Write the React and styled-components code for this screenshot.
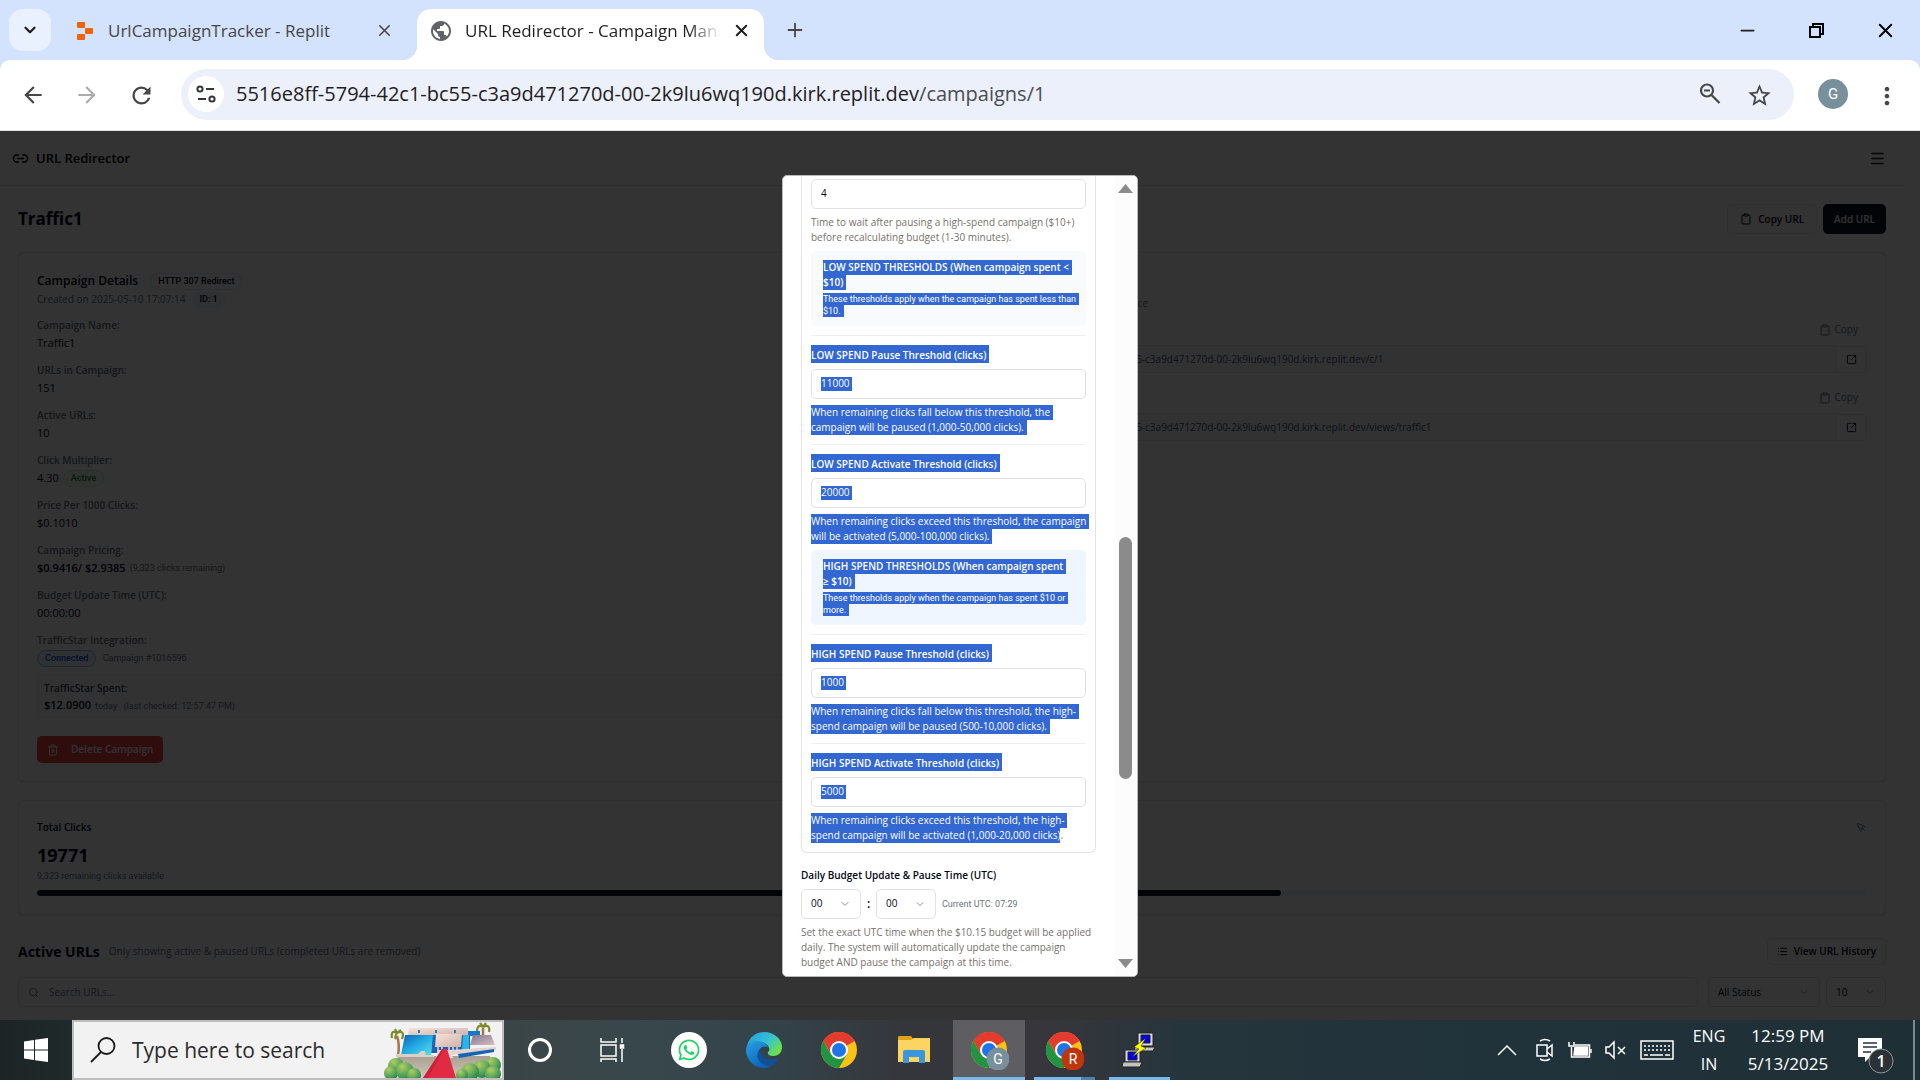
import React from 'react';
import styled, { createGlobalStyle, css } from 'styled-components';
import {
  Link2, Menu, Clipboard, SquareArrowOutUpRight, Trash2, List, MousePointer, Search, ChevronDown, Plus, X, Minus,
} from 'lucide-react';
import { MdArrowBack, MdArrowForward, MdRefresh, MdStarOutline, MdPublic, MdMoreVert } from 'react-icons/md';
import { FaWhatsapp } from 'react-icons/fa';

const Global = createGlobalStyle`
  *, *::before, *::after { box-sizing: border-box; }
  body { margin: 0; font-family: "Open Sans", "Noto Sans", sans-serif; color: #020617; }
  h1, h2, h3, p, dl, dt, dd { margin: 0; }
  button, input, select { font: inherit; color: inherit; margin: 0; }
  button { border: 0; padding: 0; background: none; }
  svg { display: block; flex: none; }
`;

const Screen = styled.div`
  display: flex;
  flex-direction: column;
  height: 100vh;
  overflow: hidden;
`;

/* ---------- browser window ---------- */
const TabStrip = styled.header`
  display: flex;
  align-items: stretch;
  height: 60px;
  flex: none;
  padding: 9px 0 0 9px;
  background: #d3e2fd;
`;
const TabMenu = styled.button`
  width: 42px;
  height: 42px;
  border-radius: 14px;
  background: #e9f1fe;
  display: grid;
  place-items: center;
  color: #1f1f1f;
`;
const Tab = styled.div`
  position: relative;
  display: flex;
  align-items: center;
  gap: ${(p) => (p.$active ? 12 : 14)}px;
  width: ${(p) => (p.$active ? 347 : 341)}px;
  margin-left: ${(p) => (p.$active ? 0 : 25)}px;
  padding: ${(p) => (p.$active ? '0 14px 8px 12px' : '0 24px 8px 0')};
  border-radius: 14px 14px 0 0;
  background: ${(p) => (p.$active ? '#fff' : 'transparent')};
  color: ${(p) => (p.$active ? '#1f1f1f' : '#474747')};
  font-size: 17px;
  line-height: 26px;
  ${(p) => p.$active && css`
    &::before, &::after {
      content: "";
      position: absolute;
      bottom: 0;
      width: 14px;
      height: 14px;
    }
    &::before { left: -14px; background: radial-gradient(circle at 0 0, transparent 14px, #fff 14px); }
    &::after { right: -14px; background: radial-gradient(circle at 100% 0, transparent 14px, #fff 14px); }
  `}
`;
const TabTitle = styled.span`
  flex: 1;
  overflow: hidden;
  white-space: nowrap;
  ${(p) => p.$fade && css`mask-image: linear-gradient(90deg, #000 88%, transparent 100%);`}
`;
const IconButton = styled.button`
  display: grid;
  place-items: center;
  width: ${(p) => p.$w || 24}px;
  height: ${(p) => p.$h || 24}px;
  color: ${(p) => p.$color || '#1f1f1f'};
`;
const NewTab = styled(IconButton)`
  margin: 9px 0 0 19px;
`;
const WindowControls = styled.div`
  display: flex;
  margin-left: auto;
  height: 42px;
`;
const Toolbar = styled.div`
  flex: none;
  display: flex;
  align-items: center;
  height: 71px;
  padding: 0 17px 2px 16px;
  background: #fff;
  border-bottom: 1px solid #dcdfe3;
  border-radius: 10px 10px 0 0;
`;
const ToolbarBack = styled.div`
  flex: none;
  background: #d3e2fd;
`;
const NavButtons = styled.div`
  display: flex;
  gap: 20px;
`;
const Omnibox = styled.div`
  flex: 1;
  display: flex;
  align-items: center;
  height: 51px;
  margin: 0 24px 0 23px;
  padding: 0 24px 0 7px;
  border-radius: 26px;
  background: #ebf0fa;
`;
const SiteInfo = styled.button`
  display: grid;
  place-items: center;
  width: 36px;
  height: 36px;
  border-radius: 50%;
  background: #fff;
`;
const Address = styled.div`
  flex: 1;
  margin-left: 12px;
  font-size: 20px;
  line-height: 28px;
  color: #1f2024;
  span { color: #4a4d52; }
`;
const OmniActions = styled.div`
  display: flex;
  gap: 24px;
`;
const Avatar = styled.button`
  width: 30px;
  height: 30px;
  border-radius: 50%;
  background: #78909c;
  color: #fff;
  font-family: Roboto, sans-serif;
  font-size: 15px;
  margin-right: 23px;
`;

/* ---------- web page ---------- */
const Viewport = styled.main`
  position: relative;
  flex: 1;
  min-height: 0;
  overflow: hidden;
  background: #fcfcfc;
  font-size: 10px;
  line-height: 15px;
`;
const PageBody = styled.div`
  margin-right: 16px;
`;
const SiteHeader = styled.div`
  display: flex;
  align-items: center;
  justify-content: space-between;
  height: 55px;
  padding: 0 20px 0 12px;
  border-bottom: 1px solid #e5e7eb;
`;
const Brand = styled.a`
  display: flex;
  align-items: center;
  gap: 7px;
  color: #000;
  font-size: 13px;
  line-height: 20px;
  font-weight: 600;
  text-decoration: none;
`;
const Content = styled.div`
  padding: 18px 18px 0;
`;
const TitleRow = styled.div`
  display: flex;
  align-items: center;
  justify-content: space-between;
  gap: 6px;
  height: 30px;
  margin-bottom: 18px;
`;
const PageTitle = styled.h1`
  flex: 1;
  font-size: 17px;
  line-height: 24px;
  font-weight: 700;
`;
const Button = styled.button`
  display: flex;
  align-items: center;
  justify-content: center;
  gap: ${(p) => p.$gap || 6}px;
  height: ${(p) => p.$h || 30}px;
  padding: 0 ${(p) => p.$px || 12}px;
  border-radius: 5px;
  border: 1px solid ${(p) => (p.$tone ? 'transparent' : '#e2e8f0')};
  background: ${(p) => ({ dark: '#0f172a', danger: '#ef4444' }[p.$tone] || 'transparent')};
  background-clip: border-box;
  color: ${(p) => (p.$tone ? '#f8fafc' : '#020617')};
  font-weight: 600;
  white-space: nowrap;
`;
const Card = styled.section`
  border: 1px solid #e2e8f0;
  border-radius: 6px;
  box-shadow: 0 1px 2px rgba(0, 0, 0, 0.08);
  padding: 18px;
  margin-bottom: 18px;
`;
const DetailGrid = styled.div`
  display: grid;
  grid-template-columns: 1fr 1fr;
  gap: 18px;
`;
const CardTitleRow = styled.div`
  display: flex;
  align-items: center;
  gap: 12px;
  height: 20px;
`;
const CardTitle = styled.h2`
  font-size: 12px;
  line-height: 20px;
  font-weight: 600;
`;
const Badge = styled.span`
  display: inline-flex;
  align-items: center;
  height: 17px;
  padding: 0 7px;
  border-radius: 9px;
  font-family: Roboto, "Open Sans", sans-serif;
  font-size: 9px;
  line-height: 15px;
  font-weight: 500;
  border: 1px solid ${(p) => ({ green: '#bbf7d0', blue: '#93b4f5', gray: '#f1f5f9' }[p.$tone] || '#dfe4ea')};
  background: ${(p) => ({ green: '#f0fdf4', blue: '#eff6ff', gray: '#f1f5f9' }[p.$tone] || 'transparent')};
  color: ${(p) => ({ green: '#15803d', blue: '#1d4ed8' }[p.$tone] || '#020617')};
`;
const Created = styled.div`
  display: flex;
  align-items: center;
  gap: 6px;
  height: 17px;
  color: #64748b;
`;
const Facts = styled.dl`
  display: flex;
  flex-direction: column;
  gap: 9px;
  margin-top: 9px;
`;
const Fact = styled.div`
  height: 36px;
  dt { height: 17px; line-height: 16px; color: #6b7280; font-weight: 600; }
  dd { display: flex; align-items: center; gap: 4px; height: 18px; font-size: 11px; line-height: 18px; }
`;
const Small = styled.span`
  font-family: Roboto, "Open Sans", sans-serif;
  font-size: 9px;
  line-height: 14px;
  font-weight: 400;
  color: #6b7280;
`;
const SpentBox = styled.div`
  margin: 6px 0 18px;
  padding: 5px 6px;
  height: 44px;
  border: 1px solid #eceff3;
  border-radius: 4px;
  background: #f9fafb;
`;
const SpentLabel = styled.div`
  line-height: 16px;
  font-weight: 600;
  color: #374151;
`;
const SpentValue = styled.div`
  display: flex;
  align-items: baseline;
  gap: 4px;
  font-size: 11px;
  line-height: 18px;
  font-weight: 600;
`;
const LinkColumn = styled.div`
  padding-top: 25px;
`;
const Hint = styled.p`
  width: 187px;
  text-align: right;
  color: #64748b;
  white-space: nowrap;
`;
const LinkBlock = styled.div`
  padding-top: 5px;
  margin-bottom: 6px;
`;
const CopyRow = styled.div`
  display: flex;
  justify-content: flex-end;
  padding: 0 9px 2px 0;
  button { display: flex; align-items: center; gap: 4px; height: 27px; color: #64748b; }
`;
const LinkRow = styled.div`
  display: flex;
  align-items: center;
  input {
    flex: 1;
    height: 28px;
    padding: 0 8px 0 28px;
    border: 1px solid #e2e8f0;
    background: #f8fafc;
    color: #475569;
    border-radius: 5px 0 0 5px;
  }
  a {
    display: grid;
    place-items: center;
    width: 30px;
    height: 27px;
    border: 1px solid #e2e8f0;
    border-left: 0;
    border-radius: 0 5px 5px 0;
    color: #020617;
  }
`;
const StatHead = styled.div`
  display: flex;
  align-items: center;
  justify-content: space-between;
  height: 16px;
  font-weight: 600;
`;
const StatValue = styled.p`
  margin-top: 8px;
  font-size: 18px;
  line-height: 24px;
  font-weight: 700;
`;
const StatNote = styled.p`
  font-family: Roboto, "Open Sans", sans-serif;
  font-size: 9px;
  line-height: 18px;
  color: #64748b;
`;
const Meter = styled.div`
  height: 6px;
  margin-top: 5px;
  border-radius: 3px;
  background: #f1f5f9;
  overflow: hidden;
`;
const MeterFill = styled.div`
  height: 100%;
  background: #0f172a;
  border-radius: 3px;
`;
const SectionHead = styled.div`
  display: flex;
  align-items: center;
  gap: 9px;
  height: 27px;
  margin-top: 23px;
  h2 { font-size: 14px; line-height: 22px; }
  p { flex: 1; color: #64748b; }
`;
const Filters = styled.div`
  display: flex;
  gap: 6px;
  margin-top: 12px;
`;
const SearchField = styled.label`
  flex: 1;
  display: flex;
  align-items: center;
  gap: 10px;
  height: 30px;
  padding: 0 9px;
  margin-right: 4px;
  border: 1px solid #e2e8f0;
  border-radius: 5px;
  color: #64748b;
  input { flex: 1; border: 0; padding: 0; background: none; outline: 0; }
  input::placeholder { color: #64748b; opacity: 1; }
`;
const SelectBox = styled.div`
  display: grid;
  align-items: center;
  width: ${(p) => p.$w}px;
  height: 30px;
  border: 1px solid #e2e2e4;
  border-radius: 5px;
  select {
    grid-area: 1 / 1;
    appearance: none;
    height: 100%;
    border: 0;
    background: none;
    padding: 0 9px;
    outline: 0;
  }
  svg { grid-area: 1 / 1; justify-self: end; margin-right: 9px; color: #8a8f98; pointer-events: none; }
`;

/* ---------- dialog ---------- */
const Backdrop = styled.div`
  position: absolute;
  inset: 0;
  display: flex;
  align-items: center;
  justify-content: center;
  background: rgba(0, 0, 0, 0.8);
`;
const Dialog = styled.div`
  display: flex;
  width: 356px;
  height: 802px;
  max-height: 92%;
  border: 1px solid #b9b9b9;
  border-radius: 5px;
  background: #fff;
  overflow: hidden;
`;
const DialogScroll = styled.form`
  flex: 1;
  padding: 0 18px;
  overflow: hidden;
`;
const Group = styled.div`
  padding: 3px 9px 9px;
  border: 1px solid #e4e4e7;
  border-top: 0;
  border-radius: 0 0 6px 6px;
`;
const Field = styled.div`
  display: flex;
  flex-direction: column;
  gap: 6px;
  ${(p) => p.$ruled && css`
    margin-top: 9px;
    padding-top: 9px;
    border-top: 1px solid #efeff1;
  `}
`;
const FieldLabel = styled.label`
  display: flex;
  height: 18px;
  line-height: 20px;
  font-weight: 600;
  white-space: nowrap;
`;
const TextBox = styled.div`
  display: flex;
  align-items: center;
  height: 30px;
  padding: 0 9px;
  border: 1px solid #e2e2e4;
  border-radius: 5px;
  input {
    field-sizing: content;
    height: 14px;
    min-width: 8px;
    padding: 0 2px 0 0;
    border: 0;
    outline: 0;
    background: ${(p) => (p.$selected ? '#3367d1' : 'transparent')};
    color: ${(p) => (p.$selected ? '#fff' : '#0a0a0a')};
  }
`;
const Marked = styled.mark`
  padding-right: ${(p) => (p.$tight ? 0 : 3)}px;
  background: #3367d1;
  color: #fff;
`;
const Line = styled.span`
  display: flex;
  white-space: nowrap;
`;
const Help = styled.p`
  color: #78716c;
`;
const Callout = styled.div`
  margin-top: 6px;
  padding: 9px 12px;
  border-radius: 5px;
  background: ${(p) => (p.$blue ? '#eff6ff' : '#f9fafb')};
  h3 { font-size: 10px; line-height: 15px; font-weight: 600; }
  p { margin-top: 3px; font-family: Roboto, "Open Sans", sans-serif; font-size: 9px; line-height: 12px; }
`;
const TimeSection = styled.div`
  display: flex;
  flex-direction: column;
  gap: 6px;
  padding-top: 12px;
`;
const TimeRow = styled.div`
  display: flex;
  align-items: center;
  gap: 6px;
  b { width: 3px; font-size: 12px; font-weight: 600; }
`;
const Scrollbar = styled.div`
  display: flex;
  flex-direction: column;
  align-items: center;
  width: 23px;
  padding: 8px 0;
  background: #fcfcfc;
`;
const Thumb = styled.div`
  width: 13px;
  height: 242px;
  margin-top: 344px;
  margin-bottom: auto;
  border-radius: 7px;
  background: #8b8b8b;
`;

/* ---------- taskbar ---------- */
const Taskbar = styled.footer`
  flex: none;
  display: flex;
  height: 60px;
  color: #fff;
  background: linear-gradient(90deg, #1c2425 0%, #20292a 3%, #3b4648 28%, #37474c 34%, #33434a 40%, #35363c 47%, #36363c 55%, #24353c 62%, #20323a 80%, #1f2f36 100%);
`;
const StartButton = styled.button`
  display: grid;
  place-items: center;
  width: 72px;
`;
const TaskSearch = styled.label`
  display: flex;
  align-items: center;
  width: 432px;
  padding-left: 16px;
  border: 2px solid #bdbdbd;
  background: #f2f2f2;
  color: #1a1a1a;
  input {
    flex: 1;
    min-width: 0;
    margin-left: 16px;
    padding: 0;
    border: 0;
    background: none;
    font-size: 21px;
    line-height: 28px;
    outline: 0;
  }
  input::placeholder { color: #2b2b2b; opacity: 1; }
`;
const TaskButton = styled.button`
  position: relative;
  display: grid;
  place-items: center;
  width: 72px;
  background: ${(p) => (p.$active ? '#5d5d62' : 'transparent')};
  ${(p) => p.$open && css`
    &::after {
      content: "";
      position: absolute;
      bottom: 0;
      left: ${p.$active ? 0 : 6}px;
      right: ${p.$active ? 0 : 5}px;
      height: 3px;
      background: ${p.$stack ? 'linear-gradient(90deg, #76b9ed 77%, #4f83ac 77%)' : '#76b9ed'};
    }
  `}
`;
const Apps = styled.div`
  display: flex;
  gap: 3px;
  margin-left: 5px;
`;
const Tray = styled.div`
  display: flex;
  align-items: center;
  margin-left: auto;
`;
const TrayIcons = styled.div`
  display: flex;
  align-items: center;
  gap: 13px;
`;
const TrayText = styled.div`
  width: ${(p) => p.$w}px;
  text-align: center;
  font-size: ${(p) => p.$size}px;
  line-height: 28px;
  white-space: nowrap;
`;
const ShowDesktop = styled.button`
  align-self: stretch;
  width: 7px;
  border-left: 2px solid #7e898d;
`;

const Replit = () => (
  <svg width="18" height="22" viewBox="0 0 18 22" fill="#f26207">
    <rect x="1" y="2" width="8" height="6" rx="1" />
    <rect x="9" y="8" width="8" height="6" rx="1" />
    <rect x="1" y="14" width="8" height="6" rx="1" />
  </svg>
);
const Tune = () => (
  <svg width="20" height="20" viewBox="0 0 20 20" fill="none" stroke="#33363b" strokeWidth="2">
    <circle cx="4" cy="5" r="2.6" /><path d="M10 5h8M2 15h8" /><circle cx="16" cy="15" r="2.6" />
  </svg>
);
const ZoomOut = () => (
  <svg width="24" height="24" viewBox="0 0 24 24" fill="none" stroke="#474747" strokeWidth="2.2">
    <circle cx="9" cy="8.500" r="6" /><path d="M13 12.500l8.500 8.500M6 8.500h6" />
  </svg>
);
const Restore = () => (
  <svg width="17" height="17" viewBox="0 0 17 17" fill="none" stroke="#000" strokeWidth="2">
    <path d="M2 5h10v10H2zM5 5V2h10v10h-3" />
  </svg>
);
const Windows = () => (
  <svg width="24" height="24" viewBox="0 0 24 24" fill="#fff">
    <path d="M0 3.400L10 2v9.500H0zM11 1.800L24 0v11.500H11zM0 12.500h10V22L0 20.600zM11 12.500h13V24l-13-1.800z" />
  </svg>
);
const Magnifier = () => (
  <svg width="26" height="26" viewBox="0 0 26 26" fill="none" stroke="#1a1a1a" strokeWidth="1.8">
    <circle cx="16.500" cy="9" r="8" /><path d="M11 15L1 25" />
  </svg>
);
const Premiere = () => (
  <svg width="118" height="56" viewBox="0 0 118 56">
    <defs>
      <linearGradient id="glass" x1="0" y1="0" x2="1" y2="1"><stop offset="0" stopColor="#0a5fb4" /><stop offset=".45" stopColor="#1fa6e0" /><stop offset="1" stopColor="#58e0ec" /></linearGradient>
      <linearGradient id="roof" x1="0" y1="0" x2="1" y2="1"><stop offset="0" stopColor="#f7e3d8" /><stop offset="1" stopColor="#cfb0aa" /></linearGradient>
      <linearGradient id="wing" x1="0" y1="0" x2="1" y2="1"><stop offset="0" stopColor="#7f7596" /><stop offset="1" stopColor="#d9c0be" /></linearGradient>
      <linearGradient id="ground" x1="0" y1="0" x2="0" y2="1"><stop offset="0" stopColor="#a89f92" /><stop offset="1" stopColor="#cfc7bb" /></linearGradient>
      <radialGradient id="leaf" cx=".35" cy=".25" r=".9"><stop offset="0" stopColor="#b4cb62" /><stop offset=".5" stopColor="#5aa85a" /><stop offset="1" stopColor="#1c6b45" /></radialGradient>
    </defs>
    <path d="M14 34h92l6 22H8z" fill="url(#ground)" />
    <path d="M13 14q3 9 1 19M99 6v12" stroke="#a5764c" strokeWidth="2.500" fill="none" />
    <path d="M13 11c-5-3-6 1-5 5M13 11c6-3 7 1 5 6M13 11c-2 3-2 5-1 6M13 11l-2-4M13 11l4-3M99 5c-5-3-6 1-6 5M99 5c6-3 7 1 6 5M99 5l-3-4M99 5l3-4" stroke="#7f8a2a" strokeWidth="2.200" fill="none" />
    <path d="M84 9h12v5H84z" fill="#1677c9" />
    <path d="M48 13h38v18H47z" fill="#1a63b8" />
    <path d="M21 13h28l-2 20H17z" fill="url(#glass)" />
    <path d="M79 13h6v16h-7z" fill="#2ab4e8" />
    <path d="M25 6h59v7H24z" fill="url(#roof)" /><path d="M35 8v3M52 8v3M71 8v3" stroke="#1d86b8" strokeWidth="2" />
    <path d="M52 12h26l-1 13H51z" fill="url(#roof)" />
    <path d="M89 13h18l4 10H86z" fill="url(#wing)" />
    <path d="M66 28l46-3v3l-44 5z" fill="#e6d2cc" /><path d="M74 32l36-5v3l-35 6z" fill="#1565b5" />
    <path d="M12 32h22l3-3h4l1 4h8v2H12z" fill="#d9d0c6" />
    <path d="M54 25v6M58 25v4M65 25v4M69 25v4M73 25v4" stroke="#e9d6cf" strokeWidth="1.500" />
    <path d="M54 28h4l-2 8h-4zM63 28h4l2 8h-4z" fill="#e9dad5" />
    <path d="M58 27h5l9 29H39z" fill="#e12b42" /><path d="M58 27h2L44 56h-5z" fill="#b51a30" opacity=".5" />
    <g fill="url(#leaf)">
      <circle cx="12" cy="44" r="8" /><circle cx="7" cy="51" r="7" /><circle cx="21" cy="49" r="9" /><circle cx="30" cy="53" r="7" />
      <circle cx="109" cy="43" r="8" /><circle cx="98" cy="47" r="9" /><circle cx="86" cy="50" r="9" /><circle cx="78" cy="53" r="6" /><circle cx="109" cy="52" r="8" />
    </g>
  </svg>
);
const TaskView = () => (
  <svg width="26" height="26" viewBox="0 0 26 26" fill="none" stroke="#fff" strokeWidth="1.500">
    <path d="M2 1v4h15V1M2 8h15v11H2zM2 25v-3h15v3M23 1v5M23 12v13" /><path d="M21.500 8h3v3h-3z" fill="#fff" />
  </svg>
);
const Edge = () => (
  <svg width="36" height="36" viewBox="0 0 36 36">
    <defs>
      <linearGradient id="e1" x1="0" y1="0" x2="1" y2=".6"><stop offset="0" stopColor="#1d9be0" /><stop offset=".6" stopColor="#35c1d4" /><stop offset="1" stopColor="#6be04b" /></linearGradient>
      <linearGradient id="e2" x1="0" y1="0" x2=".6" y2="1"><stop offset="0" stopColor="#2a9fe4" /><stop offset="1" stopColor="#0a62b8" /></linearGradient>
    </defs>
    <path d="M1 14C3 5 10 0 18 0c10 0 18 7 18 15 0 6-4 9-9 9-4 0-6-2-5-4 1-1 2-2 1-4-1-4-5-6-10-6S3 11 1 14z" fill="url(#e1)" />
    <path d="M0 18c0-6 5-9 11-9 5 0 9 2 11 6-2-1-6-1-8 2-3 4-1 12 6 15 3 1 5 1 7 0-3 3-7 4-9 4C8 36 0 28 0 18z" fill="url(#e2)" />
    <path d="M14 17c-6 6-1 17 10 17 5-1 8-5 9-7 0-1 0-1-1-1-7 4-17 1-18-9z" fill="#134f97" />
  </svg>
);
const Chrome = ({ letter, tint }) => (
  <svg width="40" height="40" viewBox="0 0 40 40">
    <circle cx="20" cy="20" r="18" fill="#fbc116" />
    <path d="M20 20L4.400 11A18 18 0 0 1 35.600 11z" fill="#e33b2e" />
    <path d="M20 11h15.600A18 18 0 0 0 4.400 11L12.200 24.500z" fill="#e33b2e" />
    <path d="M4.400 11A18 18 0 0 0 20 38l7.800-13.500L20 29l-8-4.500z" fill="#229342" />
    <circle cx="20" cy="20" r="9" fill="#fff" /><circle cx="20" cy="20" r="7" fill="#1f74e8" />
    {letter && (
      <>
        <circle cx="29" cy="29" r="11.500" fill={tint} />
        <text x="29" y="34" textAnchor="middle" fontFamily="Roboto, sans-serif" fontSize="14" fill="#fff">{letter}</text>
      </>
    )}
  </svg>
);
const Folder = () => (
  <svg width="34" height="30" viewBox="0 0 34 30">
    <path d="M1 2q0-1 1-1h12l3 4H1z" fill="#e0a218" /><path d="M1 5h13l3-2h16v24H1z" fill="#fcd462" />
    <path d="M6 28V17q0-2 2-2h18q2 0 2 2v11h-6v-6h-10v6z" fill="#3b96dd" />
  </svg>
);
const Putty = () => (
  <svg width="36" height="36" viewBox="0 0 36 36" stroke="#222" strokeWidth="1">
    <path d="M17 1h15v13H17z" fill="#d8d8d8" /><path d="M20 3h9v8h-9z" fill="#0000f0" /><path d="M14 15h20l-2 4H13z" fill="#c4c4c4" />
    <path d="M4 18h15v12H4z" fill="#d8d8d8" /><path d="M7 20h9v8H7z" fill="#0000f0" /><path d="M2 30h19l-2 5H1z" fill="#c4c4c4" />
    <path d="M25 6l-12 9 5 2-7 8 14-9-5-2z" fill="#ffff00" strokeWidth=".500" />
  </svg>
);
const tray = { fill: 'none', stroke: '#fff', strokeWidth: 1.5 };

const Strong = styled.strong`
  font-weight: 600;
`;

const facts = [
  ['Campaign Name:', 'Traffic1'],
  ['URLs in Campaign:', '151'],
  ['Active URLs:', '10'],
  ['Click Multiplier:', <>4.30 <Badge $tone="green">Active</Badge></>],
  ['Price Per 1000 Clicks:', '$0.1010'],
  ['Campaign Pricing:', <><Strong>$0.9416/ $2.9385</Strong><Small>(9,323 clicks remaining)</Small></>],
  ['Budget Update Time (UTC):', '00:00:00'],
  ['TrafficStar Integration:', <><Badge $tone="blue">Connected</Badge><Small>&nbsp;Campaign #1016596</Small></>],
];
const host = 'https://5516e8ff-5794-42c1-bc55-c3a9d471270d-00-2k9lu6wq190d.kirk.replit.dev';

function SelectedLines({ lines, tail }) {
  return lines.map((text, i) => {
    const partial = tail && i === lines.length - 1;
    return <Line key={text}><Marked $tight={partial}>{text}</Marked>{partial && tail}</Line>;
  });
}

function Threshold({ id, label, value, help, tail }) {
  return (
    <Field $ruled>
      <FieldLabel htmlFor={id}><Marked>{label}</Marked></FieldLabel>
      <TextBox $selected><input id={id} defaultValue={value} /></TextBox>
      <Help><SelectedLines lines={help} tail={tail} /></Help>
    </Field>
  );
}

function Select({ label, value, width }) {
  return (
    <SelectBox $w={width}>
      <select aria-label={label} defaultValue={value}><option>{value}</option></select>
      <ChevronDown size={12} />
    </SelectBox>
  );
}

function LinkItem({ path, label }) {
  return (
    <LinkBlock>
      <CopyRow><button type="button"><Clipboard size={12} />Copy</button></CopyRow>
      <LinkRow>
        <input aria-label={label} readOnly value={host + path} />
        <a href={host + path} aria-label="Open link"><SquareArrowOutUpRight size={11} /></a>
      </LinkRow>
    </LinkBlock>
  );
}

function CampaignPage() {
  return (
    <PageBody>
      <SiteHeader>
        <Brand href="#"><Link2 size={17} />URL Redirector</Brand>
        <IconButton $w={15} aria-label="Menu"><Menu size={17} /></IconButton>
      </SiteHeader>
      <Content>
        <TitleRow>
          <PageTitle>Traffic1</PageTitle>
          <Button><Clipboard size={12} />Copy URL</Button>
          <Button $tone="dark" $px={10}>Add URL</Button>
        </TitleRow>
        <Card>
          <DetailGrid>
            <div>
              <CardTitleRow><CardTitle>Campaign Details</CardTitle><Badge>HTTP 307 Redirect</Badge></CardTitleRow>
              <Created>Created on 2025-05-10 17:07:14 <Badge $tone="gray">ID: 1</Badge></Created>
              <Facts>
                {facts.map(([k, v]) => <Fact key={k}><dt>{k}</dt><dd>{v}</dd></Fact>)}
              </Facts>
              <SpentBox>
                <SpentLabel>TrafficStar Spent:</SpentLabel>
                <SpentValue>$12.0900 <Small>today</Small> <Small>&nbsp;(last checked: 12:57:47 PM)</Small></SpentValue>
              </SpentBox>
              <Button $tone="danger" $h={27} $px={9} $gap={12}><Trash2 size={12} />Delete Campaign</Button>
            </div>
            <LinkColumn>
              <Hint>Redirect links for best performance</Hint>
              <LinkItem path="/c/1" label="Campaign link" />
              <LinkItem path="/views/traffic1" label="Custom link" />
            </LinkColumn>
          </DetailGrid>
        </Card>
        <Card>
          <StatHead>Total Clicks<MousePointer size={11} color="#64748b" /></StatHead>
          <StatValue>19771</StatValue>
          <StatNote>9,323 remaining clicks available</StatNote>
          <Meter><MeterFill style={{ width: `${(19771 / (19771 + 9323)) * 100}%` }} /></Meter>
        </Card>
        <SectionHead>
          <h2>Active URLs</h2>
          <p>Only showing active &amp; paused URLs (completed URLs are removed)</p>
          <Button $h={27} $px={9}><List size={11} />View URL History</Button>
        </SectionHead>
        <Filters>
          <SearchField><Search size={11} /><input aria-label="Search URLs" placeholder="Search URLs..." /></SearchField>
          <Select label="Status" value="All Status" width={112} />
          <Select label="Rows per page" value="10" width={60} />
        </Filters>
      </Content>
    </PageBody>
  );
}

function EditDialog() {
  return (
    <Dialog role="dialog" aria-label="Edit campaign">
      <DialogScroll>
        <Group>
          <Field>
            <TextBox><input aria-label="Wait minutes" defaultValue="4" /></TextBox>
            <Help>
              <Line>Time to wait after pausing a high-spend campaign ($10+)</Line>
              <Line>before recalculating budget (1-30 minutes).</Line>
            </Help>
          </Field>
          <Callout>
            <h3><SelectedLines lines={['LOW SPEND THRESHOLDS (When campaign spent <', '$10)']} /></h3>
            <p><SelectedLines lines={['These thresholds apply when the campaign has spent less than', '$10.']} /></p>
          </Callout>
          <Threshold id="low-pause" label="LOW SPEND Pause Threshold (clicks)" value="11000"
            help={['When remaining clicks fall below this threshold, the', 'campaign will be paused (1,000-50,000 clicks).']} />
          <Threshold id="low-activate" label="LOW SPEND Activate Threshold (clicks)" value="20000"
            help={['When remaining clicks exceed this threshold, the campaign', 'will be activated (5,000-100,000 clicks).']} />
          <Callout $blue>
            <h3><SelectedLines lines={['HIGH SPEND THRESHOLDS (When campaign spent', '≥ $10)']} /></h3>
            <p><SelectedLines lines={['These thresholds apply when the campaign has spent $10 or', 'more.']} /></p>
          </Callout>
          <Threshold id="high-pause" label="HIGH SPEND Pause Threshold (clicks)" value="1000"
            help={['When remaining clicks fall below this threshold, the high-', 'spend campaign will be paused (500-10,000 clicks).']} />
          <Threshold id="high-activate" label="HIGH SPEND Activate Threshold (clicks)" value="5000"
            help={['When remaining clicks exceed this threshold, the high-', 'spend campaign will be activated (1,000-20,000 clicks)']} tail="." />
        </Group>
        <TimeSection>
          <FieldLabel as="span">Daily Budget Update &amp; Pause Time (UTC)</FieldLabel>
          <TimeRow>
            <Select label="Hour" value="00" width={60} />
            <b>:</b>
            <Select label="Minute" value="00" width={60} />
            <Small>Current UTC: 07:29</Small>
          </TimeRow>
          <Help>
            <Line>Set the exact UTC time when the $10.15 budget will be applied</Line>
            <Line>daily. The system will automatically update the campaign</Line>
            <Line>budget AND pause the campaign at this time.</Line>
          </Help>
        </TimeSection>
      </DialogScroll>
      <Scrollbar>
        <svg width="15" height="9"><path d="M0 9L7.500 0 15 9z" fill="#8b8b8b" /></svg>
        <Thumb />
        <svg width="15" height="9"><path d="M0 0h15L7.500 9z" fill="#8b8b8b" /></svg>
      </Scrollbar>
    </Dialog>
  );
}

export default function App() {
  return (
    <Screen>
      <Global />
      <TabStrip>
        <TabMenu aria-label="Search tabs"><ChevronDown size={18} strokeWidth={3} /></TabMenu>
        <Tab>
          <Replit />
          <TabTitle>UrlCampaignTracker - Replit</TabTitle>
          <IconButton $w={18} $color="#474747" aria-label="Close tab"><X size={19} /></IconButton>
        </Tab>
        <Tab $active>
          <MdPublic size={24} color="#5f6368" />
          <TabTitle $fade>URL Redirector - Campaign Manager</TabTitle>
          <IconButton $w={18} aria-label="Close tab"><X size={19} strokeWidth={2.5} /></IconButton>
        </Tab>
        <NewTab aria-label="New tab"><Plus size={22} color="#474747" /></NewTab>
        <WindowControls>
          <IconButton $w={69} $h={42} aria-label="Minimize"><Minus size={21} /></IconButton>
          <IconButton $w={69} $h={42} aria-label="Restore"><Restore /></IconButton>
          <IconButton $w={69} $h={42} aria-label="Close"><X size={23} color="#000" /></IconButton>
        </WindowControls>
      </TabStrip>
      <ToolbarBack>
        <Toolbar>
          <NavButtons>
            <IconButton $w={34} $color="#474747" aria-label="Back"><MdArrowBack size={26} /></IconButton>
            <IconButton $w={34} $color="#ababab" aria-label="Forward"><MdArrowForward size={26} /></IconButton>
            <IconButton $w={34} $color="#474747" aria-label="Reload"><MdRefresh size={27} /></IconButton>
          </NavButtons>
          <Omnibox>
            <SiteInfo aria-label="Site information"><Tune /></SiteInfo>
            <Address>5516e8ff-5794-42c1-bc55-c3a9d471270d-00-2k9lu6wq190d.kirk.replit.dev<span>/campaigns/1</span></Address>
            <OmniActions>
              <IconButton aria-label="Zoom"><ZoomOut /></IconButton>
              <IconButton $color="#474747" aria-label="Bookmark"><MdStarOutline size={27} /></IconButton>
            </OmniActions>
          </Omnibox>
          <Avatar>G</Avatar>
          <IconButton $w={32} $color="#474747" aria-label="More"><MdMoreVert size={28} /></IconButton>
        </Toolbar>
      </ToolbarBack>
      <Viewport>
        <CampaignPage />
        <Backdrop><EditDialog /></Backdrop>
      </Viewport>
      <Taskbar>
        <StartButton aria-label="Start"><Windows /></StartButton>
        <TaskSearch>
          <Magnifier />
          <input aria-label="Search" placeholder="Type here to search" />
          <Premiere />
        </TaskSearch>
        <TaskButton aria-label="Cortana">
          <svg width="26" height="26"><circle cx="13" cy="13" r="10.500" fill="none" stroke="#fff" strokeWidth="3" /></svg>
        </TaskButton>
        <TaskButton aria-label="Task view"><TaskView /></TaskButton>
        <Apps>
          <TaskButton aria-label="WhatsApp">
            <svg width="36" height="36"><circle cx="18" cy="18" r="18" fill="#fff" /><FaWhatsapp x="6" y="6" size={24} color="#25d366" /></svg>
          </TaskButton>
          <TaskButton aria-label="Edge"><Edge /></TaskButton>
          <TaskButton aria-label="Chrome"><Chrome /></TaskButton>
          <TaskButton aria-label="File Explorer"><Folder /></TaskButton>
          <TaskButton $active $open aria-label="Chrome, profile G"><Chrome letter="G" tint="#78909c" /></TaskButton>
          <TaskButton $open $stack aria-label="Chrome, profile R"><Chrome letter="R" tint="#bf360c" /></TaskButton>
          <TaskButton $open aria-label="PuTTY"><Putty /></TaskButton>
        </Apps>
        <Tray>
          <TrayIcons>
            <svg width="20" height="12" {...tray}><path d="M1 11l9-9 9 9" /></svg>
            <svg width="24" height="24" {...tray}><path d="M7 7h10v11H7zM17 11l5-4v11l-5-4M10 3q5-3 10 0M10 21q5 3 10 0" /></svg>
            <svg width="25" height="18" {...tray}><path d="M2 1v4h5V1M4.500 6v10h18V4H8" /><path d="M8 6h12.500v8H7z" fill="#fff" /><path d="M24 8v4" /></svg>
            <svg width="22" height="20" {...tray}><path d="M1 7h3l5-5v16l-5-5H1zM13 7l7 7M20 7l-7 7" /></svg>
            <svg width="34" height="20" {...tray}><path d="M1 1h32v18H1z" /><path d="M4 6h26M4 10h26" strokeDasharray="2 2" /><path d="M4 15h4M10 15h13M25 15h5" /></svg>
          </TrayIcons>
          <TrayText $w={70} $size={16}>ENG<br />IN</TrayText>
          <TrayText $w={88} $size={17}>12:59 PM<br />5/13/2025</TrayText>
          <svg width="81" height="60" viewBox="0 0 81 60">
            <path d="M26 18h24v19H38l-5 5v-5h-7z" fill="#fff" /><path d="M31 23h14M31 27h14M31 32h8" stroke="#20323a" strokeWidth="1.500" />
            <circle cx="49" cy="41" r="12" fill="#2b3237" stroke="#8d9498" /><text x="49" y="47" textAnchor="middle" fontSize="16" fontWeight="600" fill="#fff">1</text>
          </svg>
          <ShowDesktop aria-label="Show desktop" />
        </Tray>
      </Taskbar>
    </Screen>
  );
}
